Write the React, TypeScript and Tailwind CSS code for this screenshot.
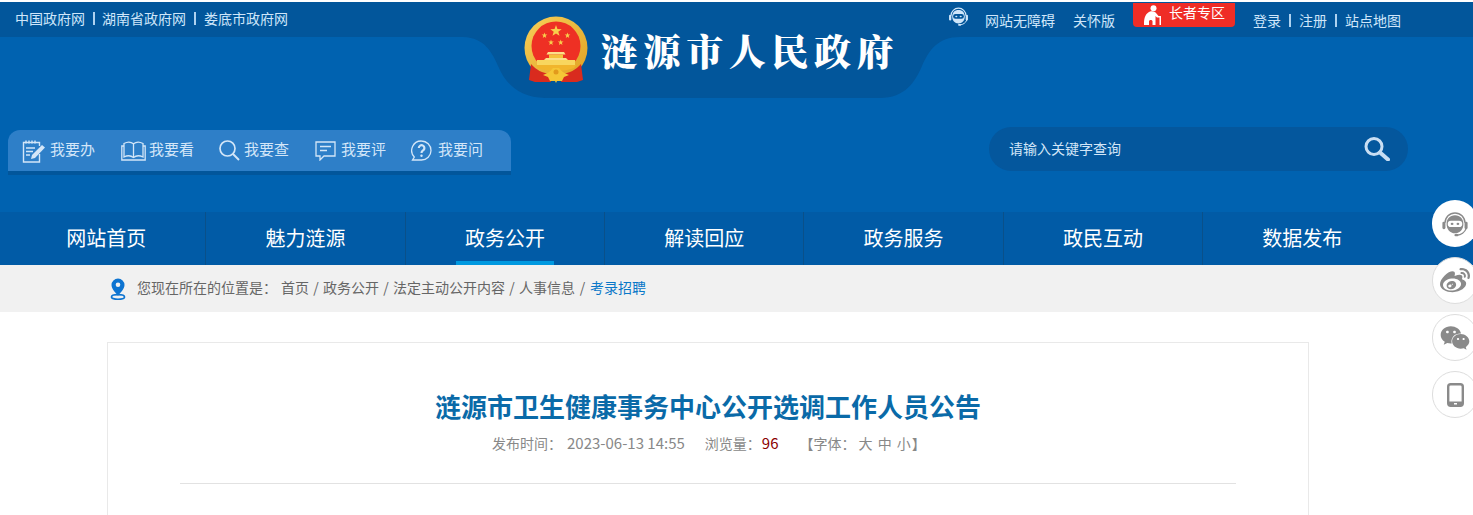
import React from "react";
import { FaWeibo, FaWeixin } from "react-icons/fa";

const sans = "font-['Microsoft_YaHei','Noto_Sans_CJK_SC',sans-serif]";

const Robot = ({ c = "#cfe6fa", eye = "#02569b", size = 22 }: { c?: string; eye?: string; size?: number }) => (
  <svg width={size} height={size} viewBox="0 0 24 24">
    <path d="M3.500 11a8.500 8.500 0 0 1 17 0" fill="none" stroke={c} strokeWidth="1.300" />
    <rect x="1.200" y="10" width="2.600" height="6.500" rx="1.200" fill={c} />
    <rect x="20.200" y="10" width="2.600" height="6.500" rx="1.200" fill={c} />
    <path d="M12 4.500c4.500 0 7.200 3 7.200 7.500 0 4.500-3 8-7.200 8s-7.200-3.500-7.200-8c0-4.500 2.700-7.500 7.200-7.500z" fill={c} />
    <rect x="5.800" y="9.200" width="12.400" height="5.400" rx="2.700" fill={eye} />
    <ellipse cx="9.500" cy="11.900" rx="1.200" ry="0.900" fill={c} />
    <ellipse cx="14.500" cy="11.900" rx="1.200" ry="0.900" fill={c} />
    <path d="M21.500 16c-1 3-4.500 5.500-7.500 5.500" fill="none" stroke={c} strokeWidth="1.100" />
    <rect x="11.500" y="20.500" width="3.500" height="2" rx="1" fill={c} />
  </svg>
);

const Star = ({ x, y, r, fill = "#f8d04c" }: { x: number; y: number; r: number; fill?: string }) => {
  const pts = Array.from({ length: 10 }, (_, i) => {
    const rad = i % 2 ? r * 0.4 : r;
    const a = -Math.PI / 2 + (i * Math.PI) / 5;
    return `${x + rad * Math.cos(a)},${y + rad * Math.sin(a)}`;
  }).join(" ");
  return <polygon points={pts} fill={fill} />;
};

const Emblem = () => (
  <svg width="66" height="70" viewBox="0 0 66 70">
    <defs>
      <linearGradient id="g" x1="0" y1="0" x2="1" y2="1">
        <stop offset="0" stopColor="#f7d05a" />
        <stop offset="1" stopColor="#e0a020" />
      </linearGradient>
    </defs>
    <circle cx="33" cy="32" r="31.500" fill="url(#g)" />
    <circle cx="33" cy="30" r="24.500" fill="#ee3024" />
    <Star x={33} y={15} r={6} />
    <Star x={21.500} y={19.500} r={3} />
    <Star x={44.500} y={19.500} r={3} />
    <Star x={28} y={26.500} r={3} />
    <Star x={37.700} y={26.500} r={3} />
    <path d="M25 36h16l1.500 2.500H23.500z" fill="#fbe08a" />
    <rect x="26" y="38.500" width="14" height="3.500" fill="#f5c23c" />
    <path d="M23 42h20l2 2H21z" fill="#fbe08a" />
    <rect x="14" y="44" width="38" height="5" fill="#f8d65e" />
    <path d="M13 49h40l-2 3c-10 4-26 4-36 0z" fill="#f1b52c" />
    <path d="M8 48c5 6 12 9 18 10l2 8H12l-6-2zM58 48c-5 6-12 9-18 10l-2 8h16l6-2z" fill="#d92b1e" />
    <path d="M20 59c5-2 8-4 10-7h6c2 3 5 5 10 7l-5 2-2 4h-5l-1 2-1-2h-5l-2-4z" fill="#f5c636" />
    <circle cx="33" cy="56" r="2.500" fill="#e29a1c" />
  </svg>
);

const ic = "#d3e6f8";
const Doc = () => (
  <svg width="24" height="24" viewBox="0 0 24 24" fill="none" stroke={ic} strokeWidth="1.400">
    <path d="M17.500 7V3.500H1.500V23H17.500V15" />
    <path d="M4 1.500v3M7 1.500v3M10 1.500v3M13 1.500v3M4 9h9M4 12.500h7M4 16h4" />
    <path d="M9 20l1-4L20 6l3 2.500-10 10.500z" fill={ic} stroke="none" />
  </svg>
);
const Book = () => (
  <svg width="25" height="20" viewBox="0 0 25 20" fill="none" stroke={ic} strokeWidth="1.300">
    <path d="M3 2.500C6 .8 10 .8 12.500 2.800 15 .8 19 .8 22 2.500V16c-3-1.500-7-1.500-9.500.5C10 14.500 6 14.500 3 16z" />
    <path d="M12.500 2.800V16.500M3 5H.8v14H24.200V5H22" />
  </svg>
);
const Mag = () => (
  <svg width="21" height="21" viewBox="0 0 21 21" fill="none" stroke={ic} strokeWidth="1.700">
    <circle cx="8.500" cy="8.500" r="7.500" />
    <path d="M14 14l6 6" strokeWidth="2" />
  </svg>
);
const Msg = () => (
  <svg width="21" height="21" viewBox="0 0 21 21" fill="none" stroke={ic} strokeWidth="1.300">
    <path d="M1 2h19v14H9l-4 4v-4H1z" />
    <path d="M5 6.500h11M5 10.500h7" />
  </svg>
);
const Ask = () => (
  <svg width="21" height="21" viewBox="0 0 21 21" fill="none" stroke={ic} strokeWidth="1.300">
    <path d="M10.500 1a9.500 9.500 0 0 1 0 19H1.500l1.800-3A9.500 9.500 0 0 1 10.500 1z" />
    <path d="M7.800 8a2.800 2.800 0 1 1 4.300 2.400c-1 .7-1.600 1.100-1.600 2.600" strokeWidth="2.200" />
    <circle cx="10.500" cy="15.800" r="1.200" fill={ic} stroke="none" />
  </svg>
);

const Elder = () => (
  <svg width="17" height="20" viewBox="0 0 17 20" fill="#fff">
    <circle cx="9.500" cy="3.200" r="3" />
    <path d="M6 6.500c2.500-.8 5 0 6 1.500l2.500 3H17v9h-1.500v-7.500H13l-1.500-1.500V20H8.500v-4c-.5-1.500-3-1.500-3.500 0v4H0v-2.500C0 12.500 2 8 6 6.500z" />
  </svg>
);

const Sep = ({ mr = "mr-[8px]" }: { mr?: string }) => <i className={`ml-[8px] ${mr} w-[2px] h-[13px] bg-[#aed2f0]`} />;

const quick = [
  { icon: <Doc />, text: "我要办", w: "w-[24px]", t: "ml-[4px]", g: "mr-[26px]" },
  { icon: <Book />, text: "我要看", w: "w-[25px]", t: "ml-[3px]", g: "mr-[25px]" },
  { icon: <Mag />, text: "我要查", w: "w-[21px]", t: "ml-[4px]", g: "mr-[26px]" },
  { icon: <Msg />, text: "我要评", w: "w-[21px]", t: "ml-[5px]", g: "mr-[25px]" },
  { icon: <Ask />, text: "我要问", w: "w-[21px]", t: "ml-[6px]", g: "" },
];
const nav = ["网站首页", "魅力涟源", "政务公开", "解读回应", "政务服务", "政民互动", "数据发布"];
const crumbs = ["首页", "政务公开", "法定主动公开内容", "人事信息"];

const Side = ({ dark, children }: { dark?: boolean; children: React.ReactNode }) => (
  <div className={`w-[46px] h-[47px] rounded-full bg-white flex items-center justify-center shrink-0 ${dark ? "" : "border border-[#dddddd]"}`}>
    {children}
  </div>
);

export default function App() {
  return (
    <div className={`relative w-[1473px] h-[515px] overflow-hidden bg-white pt-[2px] ${sans}`}>
      <header className="relative bg-[#0062b0] h-[210px]">
        <div className="h-[35px] bg-[#02569b] flex items-start text-[14px] leading-[35px] text-[#cfe6fa]">
          <div className="-mt-[1px] flex items-center pl-[15px]">
            <span>中国政府网</span>
            <Sep mr="mr-[7px]" />
            <span>湖南省政府网</span>
            <Sep />
            <span>娄底市政府网</span>
          </div>
          <div className="mt-[1px] ml-auto flex items-center pr-[72px]">
            <span className="mr-[16px] -mt-[9px]"><Robot size={21} /></span>
            <span className="mr-[18px]">网站无障碍</span>
            <span className="mr-[18px]">关怀版</span>
            <div className="w-[102px] h-[24px] mr-[18px] -mt-[12px] bg-[#ef2d26] rounded-b-[4px] flex items-center pl-[11px] leading-[24px] text-white">
              <Elder />
              <span className="ml-[8px] -mt-[5px]">长者专区</span>
            </div>
            <span>登录</span>
            <Sep />
            <span>注册</span>
            <Sep />
            <span>站点地图</span>
          </div>
        </div>

        <svg className="absolute left-[450px] top-[35px]" width="510" height="62" viewBox="450 37 510 62">
          <path d="M450 37 L463 37 C485 38 492 52 499 68 C506 84 520 98 545 98 L880 98 C905 98 915 82 922 66 C929 50 938 37 960 37 Z" fill="#02569b" />
        </svg>
        <div className="absolute left-[523px] top-[14px] flex items-center">
          <Emblem />
          <span className="ml-[12px] -mt-[3px] text-[37px] leading-[44px] tracking-[5.600px] font-black text-white font-['Noto_Serif_CJK_SC','Noto_Sans_CJK_SC',serif] whitespace-nowrap">涟源市人民政府</span>
        </div>

        <div className="flex items-start justify-between pl-[8px] pr-[65px] pt-[90px]">
          <div className="mt-[3px] w-[503px] h-[45px] rounded-t-[12px] bg-[#2e7fc8] border-b-[4px] border-[#02569b] flex items-center pl-[14px] text-[15px] text-[#d3e6f8]">
            {quick.map((q) => (
              <div key={q.text} className={`flex items-center ${q.g}`}>
                <span className={`${q.w} flex justify-center`}>{q.icon}</span>
                <span className={`${q.t} -mt-[4px] leading-[41px]`}>{q.text}</span>
              </div>
            ))}
          </div>
          <div className="w-[419px] h-[44px] rounded-[22px] bg-[#04579d] flex items-center justify-between pl-[20px] pr-[18px] text-[14px] text-[#d3e6f8]">
            <span className="-mt-[2px]">请输入关键字查询</span>
            <svg width="26" height="24" viewBox="0 0 26 24" fill="none" stroke="#c9def3">
              <circle cx="10" cy="9.500" r="8" strokeWidth="3" />
              <path d="M16 15.500l8 7" strokeWidth="4" strokeLinecap="round" />
            </svg>
          </div>
        </div>
      </header>

      <nav className="h-[53px] bg-[#015ba6] flex pl-[7px] pr-[71.500px]">
        {nav.map((n, i) => (
          <div key={n} className={`relative flex-1 flex items-center justify-center pb-[2px] text-[20px] text-white ${i < 6 ? "border-r border-[#0a5089]" : ""}`}>
            {n}
            {i === 2 && <i className="absolute left-[50px] bottom-0 w-[98px] h-[4px] bg-[#0099e0]" />}
          </div>
        ))}
      </nav>

      <div className="h-[47px] bg-[#f1f1f1] flex items-center pb-[2px] pl-[110px] text-[14px] text-[#666666] whitespace-nowrap">
        <svg width="16" height="22" viewBox="0 0 16 22" className="mr-[11px] mt-[2px]">
          <path d="M8 0.500a6.500 6.500 0 0 1 6.500 6.500c0 4-4.500 8-6.500 11-2-3-6.500-7-6.500-11a6.500 6.500 0 0 1 6.500-6.500z" fill="#0d74d1" />
          <circle cx="8" cy="6.800" r="2.300" fill="#f1f1f1" />
          <ellipse cx="8" cy="19" rx="6.500" ry="2.300" fill="none" stroke="#0d74d1" strokeWidth="1.700" />
        </svg>
        <span className="mr-[4px]">您现在所在的位置是：</span>
        {crumbs.map((c, i) => (
          <React.Fragment key={c}>
            <span>{c}</span>
            <span className={`${i === 3 ? "w-[15px]" : "w-[14px]"} text-center`}>/</span>
          </React.Fragment>
        ))}
        <span className="text-[#0a78c8]">考录招聘</span>
      </div>

      <main className="mt-[30px] mx-[107px] w-[1202px] h-[300px] border border-[#e9e9e9] px-[72px] pt-[46px]">
        <h1 className="text-center text-[26px] leading-[34px] font-bold text-[#0a6aa8]">涟源市卫生健康事务中心公开选调工作人员公告</h1>
        <div className="mt-[9px] h-[22px] flex items-center pl-[312px] text-[14px] leading-[22px] text-[#888888] whitespace-nowrap">
          <span>发布时间：</span>
          <span className="ml-[5px] text-[15px]">2023-06-13 14:55</span>
          <span className="ml-[20px]">浏览量：</span>
          <span className="ml-[1px] text-[15px] text-[#8b0000]">96</span>
          <span className="ml-[21px]">【字体：</span>
          <span className="ml-[3px] tracking-[1px]">大 中 小</span>
          <span>】</span>
        </div>
        <div className="mt-[29px] h-px bg-[#e2e2e2]" />
      </main>

      <aside className="absolute left-[1432px] top-[200px] flex flex-col gap-[10px]">
        <Side dark><Robot c="#8a8a8a" eye="#ffffff" size={28} /></Side>
        <Side><FaWeibo size={30} color="#8a8a8a" /></Side>
        <Side><FaWeixin size={30} color="#8a8a8a" /></Side>
        <Side>
          <svg width="17" height="24" viewBox="0 0 17 24" fill="none">
            <rect x="1.200" y="1.200" width="14.600" height="21.600" rx="2.500" stroke="#8a8a8a" strokeWidth="2.400" />
            <rect x="1" y="18.500" width="15" height="4.500" fill="#8a8a8a" />
            <rect x="7" y="20" width="3" height="1.500" fill="#fff" />
          </svg>
        </Side>
      </aside>
    </div>
  );
}
